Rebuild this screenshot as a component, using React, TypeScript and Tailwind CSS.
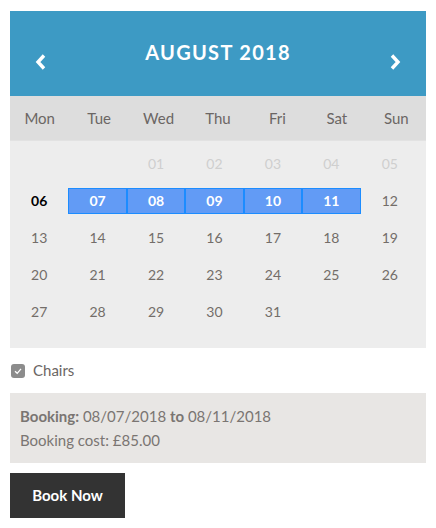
const dayNames = ['Mon', 'Tue', 'Wed', 'Thu', 'Fri', 'Sat', 'Sun'];

type Cell = { label: string; kind: 'empty' | 'past' | 'today' | 'selected' | 'normal' };

const cells: Cell[] = [
  { label: '', kind: 'empty' },
  { label: '', kind: 'empty' },
  ...['01', '02', '03', '04', '05'].map((d) => ({ label: d, kind: 'past' as const })),
  { label: '06', kind: 'today' },
  ...['07', '08', '09', '10', '11'].map((d) => ({ label: d, kind: 'selected' as const })),
  ...Array.from({ length: 20 }, (_, i) => ({ label: String(i + 12), kind: 'normal' as const })),
];

function DayCell({ cell }: { cell: Cell }) {
  if (cell.kind === 'selected') {
    return (
      <div className="h-[26px] my-[5.5px] flex items-center justify-center border border-[#1c8cff] bg-[#629bf5] text-white font-bold">
        {cell.label}
      </div>
    );
  }
  const color =
    cell.kind === 'past' ? 'text-[#cfcfcf]' : cell.kind === 'today' ? 'text-black font-bold' : 'text-[#736d69]';
  return <div className={`h-[37px] flex items-center justify-center ${color}`}>{cell.label}</div>;
}

export default function App() {
  return (
    <div className="w-[436px] h-[528px] bg-white px-[10px] pt-[11px]" style={{ fontFamily: 'Lato, "Open Sans", sans-serif' }}>
      {/* month header */}
      <div className="h-[85px] bg-[#3d9ac4] flex items-start justify-between px-[25px] text-white">
        <svg className="mt-[43px]" width="12" height="16" viewBox="0 0 12 16">
          <path d="M9 1.5 L3 8 L9 14.5" fill="none" stroke="white" strokeWidth="3.4" strokeLinejoin="miter" />
        </svg>
        <div className="mt-[29px] text-[20px] font-bold tracking-[1.3px] leading-[24px]">AUGUST 2018</div>
        <svg className="mt-[43px]" width="12" height="16" viewBox="0 0 12 16">
          <path d="M3 1.5 L9 8 L3 14.5" fill="none" stroke="white" strokeWidth="3.4" strokeLinejoin="miter" />
        </svg>
      </div>

      {/* weekday names */}
      <div className="h-[44px] bg-[#dddddd] grid grid-cols-7 items-center text-[15px] text-[#6b6664]">
        {dayNames.map((d) => (
          <div key={d} className="text-center">{d}</div>
        ))}
      </div>

      {/* dates */}
      <div className="h-[208px] bg-[#ededed] border-t border-[#e2e2e2] pt-[4px] pr-[7px]">
        <div className="grid grid-cols-7 text-[14px]">
          {cells.map((c, i) => (
            <DayCell key={i} cell={c} />
          ))}
        </div>
      </div>

      {/* options */}
      <label className="flex items-center gap-[8px] h-[45px] text-[15px] text-[#6b6664]">
        <span className="w-[14px] h-[14px] ml-[1px] rounded-[3px] bg-[#8c8c8c] flex items-center justify-center">
          <svg width="10" height="10" viewBox="0 0 10 10">
            <path d="M2 5.2 L4.2 7.3 L8 2.8" fill="none" stroke="white" strokeWidth="1.3" />
          </svg>
        </span>
        Chairs
      </label>

      {/* booking summary */}
      <div className="h-[70px] bg-[#e8e6e4] px-[10px] pt-[11px] text-[15px] leading-[24px] text-[#7a7572]">
        <div>
          <span className="font-bold">Booking:</span> 08/07/2018 <span className="font-bold">to</span> 08/11/2018
        </div>
        <div>Booking cost: £85.00</div>
      </div>

      <button className="mt-[10px] w-[115px] h-[45px] bg-[#333333] text-white font-bold text-[15px]">
        Book Now
      </button>
    </div>
  );
}
